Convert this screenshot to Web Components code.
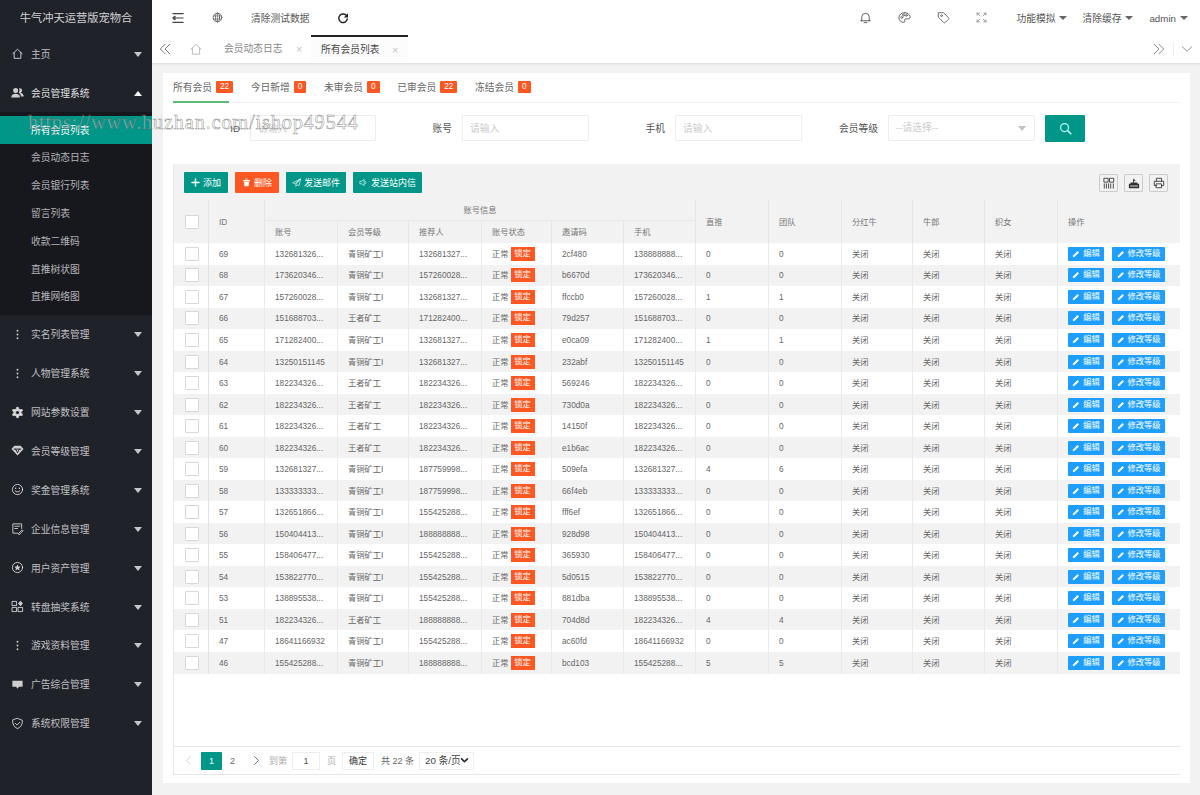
<!DOCTYPE html>
<html lang="zh-CN">
<head>
<meta charset="utf-8">
<title>会员列表</title>
<style>
html,body{margin:0;padding:0;height:795px;overflow:hidden;background:#f2f2f2}
body{font-family:"Liberation Sans","Noto Sans CJK SC",sans-serif;font-size:9.75px;line-height:14px;color:#666}
</style>
</head>
<body>
<admin-app>
  <side-menu slot="side" brand="牛气冲天运营版宠物合">
    <side-item icon="home">主页</side-item>
    <side-item icon="users" open>会员管理系统</side-item>
    <side-group>
      <sub-item active>所有会员列表</sub-item>
      <sub-item>会员动态日志</sub-item>
      <sub-item>会员银行列表</sub-item>
      <sub-item>留言列表</sub-item>
      <sub-item>收款二维码</sub-item>
      <sub-item>直推树状图</sub-item>
      <sub-item>直推网络图</sub-item>
    </side-group>
    <side-item icon="dots">实名列表管理</side-item>
    <side-item icon="dots">人物管理系统</side-item>
    <side-item icon="gear">网站参数设置</side-item>
    <side-item icon="diamond">会员等级管理</side-item>
    <side-item icon="smile">奖金管理系统</side-item>
    <side-item icon="form">企业信息管理</side-item>
    <side-item icon="star">用户资产管理</side-item>
    <side-item icon="apps">转盘抽奖系统</side-item>
    <side-item icon="dots">游戏资料管理</side-item>
    <side-item icon="chat">广告综合管理</side-item>
    <side-item icon="shield">系统权限管理</side-item>
  </side-menu>
  <top-bar></top-bar>
  <tab-bar></tab-bar>
  <member-card>
    <status-tabs></status-tabs>
    <search-form></search-form>
    <member-table></member-table>
    <table-pager></table-pager>
  </member-card>
  <water-mark>https://www.huzhan.com/ishop49544</water-mark>
</admin-app>
<script>
const ICONS={
 home:'<path d="M2 7.200 7 2.400l5 4.800M3.400 6v6.200h7.200V6" fill="none"/>',
 users:'<path fill="currentColor" stroke="none" d="M5 2.200a2.600 2.600 0 0 1 0 5.400 2.600 2.600 0 0 1 0-5.400zM.3 12.300c0-2.600 2-4 4.700-4s4.700 1.400 4.700 4zM9.600 2.400a2.500 2.500 0 0 1 .6 4.900c2 .3 3.500 1.700 3.500 4h-3c-.2-2-1-3.300-2.400-4 1-1.300 1.200-3.500.3-4.900z"/>',
 dots:'<g fill="currentColor" stroke="none"><circle cx="7" cy="3" r="1"/><circle cx="7" cy="7" r="1"/><circle cx="7" cy="11" r="1"/></g>',
 gear:'<g fill="currentColor" stroke="none"><circle cx="7" cy="7" r="4.400"/><circle cx="7" cy="2.200" r="1.500"/><circle cx="7" cy="11.800" r="1.500"/><circle cx="2.800" cy="4.600" r="1.500"/><circle cx="11.200" cy="4.600" r="1.500"/><circle cx="2.800" cy="9.400" r="1.500"/><circle cx="11.200" cy="9.400" r="1.500"/></g><circle cx="7" cy="7" r="1.700" fill="#20222a" stroke="none"/>',
 diamond:'<path fill="currentColor" stroke="none" d="M3.600 2h6.800L13.500 5.500 7 12.500.5 5.500z"/><path d="M3.500 5.500h7M5 5.500 7 9.500l2-4" fill="none" stroke="#20222a" stroke-width="1"/>',
 smile:'<circle cx="7" cy="7" r="5.500" fill="none"/><path d="M4.400 8.400c1.300 1.700 3.900 1.700 5.200 0" fill="none"/><g fill="currentColor" stroke="none"><circle cx="5" cy="5.600" r=".8"/><circle cx="9" cy="5.600" r=".8"/></g>',
 form:'<path d="M11.500 7V2h-9.500v10H7M4 4.500h5.500M4 7h3M8 12.500l4-4 1 1-4 4z" fill="none"/>',
 star:'<circle cx="7" cy="7" r="5.500" fill="none"/><path fill="currentColor" stroke="none" d="m7 3.700 1 2.300 2.400.2-1.800 1.600.6 2.400L7 9l-2.200 1.200.6-2.400-1.800-1.600L6 6z"/>',
 apps:'<g fill="none"><rect x="1.500" y="1.500" width="4.500" height="4.500"/><rect x="1.500" y="8" width="4.500" height="4.500"/><rect x="8" y="8" width="4.500" height="4.500"/></g><path fill="currentColor" stroke="none" d="M10.200.8 12.800 3.700 10.200 6.600 7.600 3.700z"/>',
 chat:'<path fill="currentColor" stroke="none" d="M1.500 3h11v6.500H8.500L7 11.500 5.500 9.500h-4z"/>',
 shield:'<path d="M7 1.500 12.200 3.500c.3 4.500-1.500 7.500-5.200 9-3.700-1.500-5.500-4.500-5.200-9z" fill="none"/><path d="m4.600 6.800 1.900 1.900 3-3" fill="none"/>',
 shrink:'<path d="M1 2h12M5 7h8M1 12h12M3.500 5 1 7l2.500 2z" fill="none" stroke-width="1.400"/>',
 globe:'<circle cx="7" cy="7" r="5.500" fill="none"/><ellipse cx="7" cy="7" rx="2.600" ry="5.500" fill="none"/><path d="M1.800 5h10.400M1.800 9h10.400M7 1.500v11" fill="none" stroke-width=".8"/>',
 refresh:'<path d="M11.500 5A5 5 0 1 0 12 8" fill="none" stroke-width="1.600"/><path fill="currentColor" stroke="none" d="M12.800 1.500v4.800H8z"/>',
 bell:'<path d="M3 10.500V6.500a4 4 0 0 1 8 0v4M1.800 10.500h10.400M5.500 12.500h3" fill="none"/>',
 palette:'<path d="M7 1.800C3.500 1.800 1 4.200 1 7.200s2.500 5 5 5c1.700 0 1.600-1.300 1.200-2-.5-1 .2-1.700 1.300-1.700H11c1.500 0 2.200-1 2-2.500C12.500 3.500 10 1.800 7 1.800z" fill="none"/><g fill="none" stroke-width=".9"><circle cx="4" cy="7" r="1"/><circle cx="5.800" cy="4.500" r="1"/><circle cx="9" cy="4.700" r="1"/></g>',
 tag:'<path d="M1.800 1.800h5.200l5.500 5.500a1 1 0 0 1 0 1.400l-3.800 3.800a1 1 0 0 1-1.400 0L1.800 7z" fill="none"/><circle cx="5" cy="5" r="1" fill="none"/>',
 full:'<path d="M1.500 1.500 5 5M1.500 1.500h2.500M1.500 1.500V4M12.500 1.500 9 5M12.500 1.500H10M12.500 1.500V4M1.500 12.500 5 9M1.500 12.500H4M1.500 12.500V10M12.500 12.500 9 9M12.500 12.500H10M12.500 12.500V10" fill="none"/>',
 left2:'<path d="M7 1.500 1.500 7 7 12.500M12.500 1.500 7 7l5.500 5.500" fill="none"/>',
 right2:'<path d="M1.500 1.500 7 7l-5.500 5.500M7 1.500 12.500 7 7 12.500" fill="none"/>',
 down:'<path d="m1.500 4.500 5.500 5 5.500-5" fill="none"/>',
 left:'<path d="M9.500 2 4.500 7l5 5" fill="none"/>',
 right:'<path d="m4.500 2 5 5-5 5" fill="none"/>',
 chev:'<path d="m2.500 4.500 4.500 4.500 4.500-4.500" fill="none" stroke-width="2.400"/>',
 plus:'<path d="M7 1.500v11M1.500 7h11" fill="none" stroke-width="2.200"/>',
 trash:'<path fill="currentColor" stroke="none" d="M1.500 3h11v2h-11zM3 6h8l-.8 7H3.800zM5 1h4v1.500H5z"/>',
 plane:'<path d="M13 1.500 1 7.500l3.500 1.500L13 1.500 6 10v3l2-2.500 2.500 1z" fill="none"/>',
 speaker:'<path d="M2 5h2.500L8 2v10L4.500 9H2zM10 5c1 1.200 1 2.800 0 4" fill="none"/>',
 search:'<circle cx="6" cy="6" r="4.300" fill="none" stroke-width="1.300"/><path d="m9.300 9.300 3.400 3.400" fill="none" stroke-width="1.700"/>',
 cols:'<path d="M1.500 1.500h4.500V6H1.500zM8 1.500h4.500V6H8zM1.500 8v5M4 8v5M6.500 8v5M9 8v5M12 8v5" fill="none"/>',
 export:'<path fill="currentColor" stroke="none" d="M1 8h12v5H1zM3 6.500h8V8H3zM6 2l3 1.800L7 5v1.500H6z"/><path d="M3 10.500h8" stroke="#f2f2f2" stroke-width="1" fill="none"/>',
 print:'<path d="M4 5V1.500h6V5M4 10H1.500V5h11v5H10M4 8h6v4.500H4z" fill="none"/>',
 pen:'<path fill="currentColor" stroke="none" d="M9.800 1.800 12.200 4.200 4.600 11.800 1.500 12.500 2.200 9.400z"/>'
};
function def(name,css,render){
  customElements.define(name,class extends HTMLElement{
    connectedCallback(){
      if(this.shadowRoot) return;
      const root=this.attachShadow({mode:'open'});
      root.innerHTML='<style>'+css+'</style>'+(render?render(this):'<slot></slot>');
    }
  });
}
def('ui-icon',':host{display:inline-flex;flex:none;width:var(--s,14px);height:var(--s,14px)}svg{width:100%;height:100%;stroke:currentColor;stroke-width:var(--w,1);stroke-linecap:round;stroke-linejoin:round}',
  el=>`<svg viewBox="0 0 14 14">${ICONS[el.getAttribute('name')]||''}</svg>`);
def('admin-app',`:host{display:grid;grid-template-columns:152px 1fr;grid-template-rows:35px 29px 1fr;width:1200px;height:795px;position:relative;overflow:hidden;background:#f2f2f2}
 ::slotted(side-menu){grid-row:1/4}`,()=>`<slot name="side"></slot><slot></slot>`);
def('side-menu',`:host{display:flex;flex-direction:column;background:#20222a;color:rgba(255,255,255,.72);height:795px}
 .brand{height:34.500px;box-sizing:border-box;padding-top:2px;display:flex;align-items:center;justify-content:center;font-size:11.250px;color:rgba(255,255,255,.8)}`,
 el=>`<div class="brand">${el.getAttribute('brand')}</div><slot></slot>`);
def('side-item',`:host{display:flex;align-items:center;height:38.900px;flex:none;position:relative;padding-left:11px;gap:7px;font-size:9.750px;--s:13px;color:rgba(255,255,255,.72)}
 :host([open]){color:rgba(255,255,255,.88)}
 ui-icon{color:rgba(255,255,255,.78)}
 span{padding-top:2px}
 .c{position:absolute;right:10px;top:50%;margin-top:-2px;border:4px solid transparent;border-top:5px solid rgba(255,255,255,.75);border-bottom:0}
 :host([open]) .c{border-top:0;border-bottom:5px solid #fff;}`,
 el=>`<ui-icon name="${el.getAttribute('icon')}"></ui-icon><span><slot></slot></span><i class="c"></i>`);
def('side-group',`:host{display:block;flex:none;background:#17181e;padding:3.500px 0 4.500px}`);
def('sub-item',`:host{display:flex;align-items:center;height:27.800px;box-sizing:border-box;padding:2px 0 0 31px;font-size:9.750px;color:rgba(255,255,255,.68)}
 :host([active]){background:#009688;color:#fff}`);
def('top-bar',`:host{display:flex;align-items:center;height:35px;background:#fff;color:#555;font-size:9.750px;--s:13px}
 .row{display:flex;align-items:center;width:100%;height:35px}
 .left{display:flex;align-items:center;margin-left:19px}
 .right{display:flex;align-items:center;margin-left:auto;padding-right:12px}
 .t{padding-top:2px}
 .mn{display:flex;align-items:center;gap:4px}
 .c{border:4px solid transparent;border-top:4px solid #666;border-bottom:0;display:block;margin-top:-2px}`,
 ()=>`<div class="row"><div class="left">
   <ui-icon name="shrink" style="--s:12px;margin-left:1px;color:#444"></ui-icon>
   <ui-icon name="globe" style="margin-left:28px;--s:11px;color:#555"></ui-icon>
   <span class="t" style="margin-left:28px">清除测试数据</span>
   <ui-icon name="refresh" style="margin-left:27px;--s:12px;color:#222"></ui-icon>
  </div><div class="right">
   <ui-icon name="bell" style="color:#555"></ui-icon>
   <ui-icon name="palette" style="margin-left:26px;color:#555"></ui-icon>
   <ui-icon name="tag" style="margin-left:26px;color:#666"></ui-icon>
   <ui-icon name="full" style="margin-left:26px;--s:11px;color:#888"></ui-icon>
   <span class="mn t" style="margin-left:29px">功能模拟<i class="c"></i></span>
   <span class="mn t" style="margin-left:15px">清除缓存<i class="c"></i></span>
   <span class="mn t" style="margin-left:16px">admin<i class="c"></i></span>
  </div></div>`);
def('tab-bar',`:host{display:flex;align-items:stretch;height:28px;background:#fff;border-bottom:1px solid #e2e2e2;box-shadow:0 1px 1px rgba(0,0,0,.03);font-size:9.750px;color:#888;--s:12px}
 .i{display:flex;align-items:center}
 .tab{display:flex;align-items:center;position:relative;height:28px}
 .t1{margin-left:21px;width:87px;justify-content:flex-start}
 .t2{width:97px;padding-left:10px;box-sizing:border-box;color:#444;background:#fcfcfc;border-top:2px solid #222}
 .x{position:absolute;font-size:11px;color:#c4c4c4;line-height:1}
 .right{margin-left:auto;display:flex;align-items:center}
 .sep{width:1px;height:14px;background:#eee;margin:0 7px 0 8px}`,
 ()=>`<span class="i" style="margin-left:7px;color:#666"><ui-icon name="left2"></ui-icon></span>
  <span class="i" style="margin-left:18px;color:#bbb"><ui-icon name="home" style="--s:14px"></ui-icon></span>
  <span class="tab t1">会员动态日志<span class="x" style="left:72px">×</span></span>
  <span class="tab t2"><span>所有会员列表</span><span class="x" style="left:81px">×</span></span>
  <span class="right"><ui-icon name="right2" style="color:#777"></ui-icon><span class="sep"></span><ui-icon name="down" style="color:#888;margin-right:7px"></ui-icon></span>`);
def('member-card',`:host{display:flex;flex-direction:column;background:#fff;margin:9px 10px 12px 11px;padding:0 10px 8px;min-height:0;height:710px;box-sizing:border-box}`);
def('status-tabs',`:host{display:flex;height:30px;flex:none;gap:17.600px;border-bottom:1px solid #f2f2f2;box-sizing:border-box;font-size:9.750px;color:#666}
 .t{display:flex;align-items:center;gap:4px;position:relative}
 .t.on::after{content:"";position:absolute;left:0;bottom:-1px;width:56px;height:2px;background:#5fb878}
 b{display:block;font-weight:400;background:#ff5722;color:#fff;font-size:8.250px;line-height:12px;height:12px;padding:0 4px;text-align:center;border-radius:1px;margin-top:-1px}`,
 ()=>[['所有会员','22',1],['今日新增','0'],['未审会员','0'],['已审会员','22'],['冻结会员','0']].map(t=>`<span class="t ${t[2]?'on':''}">${t[0]}<b>${t[1]}</b></span>`).join(''));
def('search-form',`:host{display:flex;flex:none;height:61px;box-sizing:border-box;padding-top:12px;align-items:flex-start;font-size:9.750px;color:#555}
 .f{display:grid;align-items:center;height:26px}
 label{text-align:right;padding:2px 10px 0 0}
 input,.s{box-sizing:border-box;height:26px;width:100%;border:1px solid #eee;background:#fff;padding:0 7px;font:inherit;outline:0;border-radius:1px}
 input::placeholder{color:#ccc}
 .s{color:#ccc;display:flex;align-items:center;justify-content:space-between;padding-right:8px}
 .c{border:4px solid transparent;border-top:5px solid #c2c2c2;border-bottom:0}
 .b{width:40px;height:27px;margin-left:10px;background:#009688;color:#bff;display:flex;align-items:center;justify-content:center;--s:13px;border-radius:1px;--w:1.100}`,
 ()=>`<div class="f" style="width:203px;grid-template-columns:77px 126px"><label>ID</label><input placeholder="请输入"></div>
  <div class="f" style="width:213px;grid-template-columns:86px 127px"><label>账号</label><input placeholder="请输入"></div>
  <div class="f" style="width:213px;grid-template-columns:86px 127px"><label>手机</label><input placeholder="请输入"></div>
  <div class="f" style="width:233px;grid-template-columns:86px 147px"><label>会员等级</label><div class="s">--请选择--<i class="c"></i></div></div>
  <span class="b"><ui-icon name="search"></ui-icon></span>`);
const COLS='34px 56px 73px 71px 73px 70px 72px 72px 73px 73px 71px 72px 73px 123px';
const R=[
[69,'132681326...',0,'132681327...','2cf480','138888888...',0,0],
[68,'173620346...',0,'157260028...','b6670d','173620346...',0,0],
[67,'157260028...',0,'132681327...','ffccb0','157260028...',1,1],
[66,'151688703...',1,'171282400...','79d257','151688703...',0,0],
[65,'171282400...',0,'132681327...','e0ca09','171282400...',1,1],
[64,'13250151145',0,'132681327...','232abf','13250151145',0,0],
[63,'182234326...',1,'182234326...','569246','182234326...',0,0],
[62,'182234326...',1,'182234326...','730d0a','182234326...',0,0],
[61,'182234326...',1,'182234326...','14150f','182234326...',0,0],
[60,'182234326...',1,'182234326...','e1b6ac','182234326...',0,0],
[59,'132681327...',0,'187759998...','509efa','132681327...',4,6],
[58,'133333333...',0,'187759998...','66f4eb','133333333...',0,0],
[57,'132651866...',0,'155425288...','fff6ef','132651866...',0,0],
[56,'150404413...',0,'188888888...','928d98','150404413...',0,0],
[55,'158406477...',0,'155425288...','365930','158406477...',0,0],
[54,'153822770...',0,'155425288...','5d0515','153822770...',0,0],
[53,'138895538...',0,'155425288...','881dba','138895538...',0,0],
[51,'182234326...',1,'188888888...','704d8d','182234326...',4,4],
[47,'18641166932',0,'155425288...','ac60fd','18641166932',0,0],
[46,'155425288...',0,'188888888...','bcd103','155425288...',5,5]];
def('tool-btn',`:host{display:inline-flex;align-items:center;justify-content:center;gap:3px;height:21px;width:var(--bw);background:var(--b,#009688);color:#fff;font-size:9px;--s:9px;border-radius:1px;white-space:nowrap}`,
 el=>`<ui-icon name="${el.getAttribute('icon')}"></ui-icon><slot></slot>`);
def('icon-btn',`:host{display:flex;align-items:center;justify-content:center;width:17px;height:16px;border:1px solid #ccc;color:#333;--s:12px;--w:1;border-radius:1px}`,
 el=>`<ui-icon name="${el.getAttribute('icon')}"></ui-icon>`);
def('check-box',`:host{display:block;width:12px;height:12px;background:#fff;border:1px solid #d8d8d8;border-radius:1px;margin-top:-2px}`,()=>'');
def('act-btn',`:host{display:inline-flex;align-items:center;justify-content:center;gap:3px;height:14px;margin-top:-2px;background:#1e9fff;color:#fff;font-size:8.250px;--s:8px;border-radius:1px;white-space:nowrap}`,
 el=>`<ui-icon name="pen"></ui-icon><slot></slot>`);
def('member-row',`:host{display:grid;grid-template-columns:${COLS};height:21.526px;align-items:stretch;font-size:8.250px;line-height:12px;color:#666;background:#fff}
 :host([even]){background:#f2f2f2}
 span.c{display:flex;align-items:center;padding:2px 0 0 10px;border-left:1px solid #eaeaea;box-sizing:border-box;white-space:nowrap;overflow:hidden}
 span.c.first{padding-left:11px;border-left:0}
 .lock{display:inline-block;background:#ff5722;color:#fff;width:24px;height:14px;line-height:14px;text-align:center;margin:-2px 0 0 2px;flex:none}
 .ops{gap:8px}`,
 el=>{const i=+el.getAttribute('i'),d=R[i];const off=k=>`<span class="c">${k}</span>`;
  return `<span class="c first"><check-box></check-box></span>
  <span class="c" style="border-left-color:#e2e2e2">${d[0]}</span>${off(d[1])}${off(d[2]?'王者矿工':'青铜矿工I')}${off(d[3])}
  <span class="c">正常<span class="lock">锁定</span></span>${off(d[4])}${off(d[5])}${off(d[6])}${off(d[7])}${off('关闭')}${off('关闭')}${off('关闭')}
  <span class="c ops"><act-btn style="width:36px">编辑</act-btn><act-btn style="width:53px">修改等级</act-btn></span>`});
def('member-table',`:host{display:flex;flex-direction:column;flex:1;min-height:0;font-size:8.250px;line-height:12px;color:#666;border-left:1px solid #e6e6e6;box-sizing:border-box}
 .bar{display:flex;align-items:flex-start;height:36px;flex:none;background:#f2f2f2;padding:8px 12px 0 10px;gap:7px;box-sizing:border-box}
 .bar .r{margin-left:auto;display:flex;gap:6px;margin-top:2px}
 .head{display:grid;grid-template-columns:${COLS};grid-template-rows:21px 22.200px;flex:none;background:#f2f2f2;color:#777}
 .h{display:flex;align-items:center;padding:2px 0 0 10px;border-left:1px solid #e6e6e6;box-sizing:border-box;white-space:nowrap}
 .span{grid-row:1/3}
 .group{grid-column:3/9;justify-content:center;padding-left:0;border-bottom:1px solid #e6e6e6}
 .h.nb{border-left:0;padding-left:11px}`,
 ()=>{
  const sub=['账号','会员等级','推荐人','账号状态','邀请码','手机'];
  const tail=['直推','团队','分红牛','牛郎','织女','操作'];
  return `<div class="bar"><tool-btn icon="plus" style="--bw:44px">添加</tool-btn><tool-btn icon="trash" style="--b:#ff5722;--bw:44px">删除</tool-btn><tool-btn icon="plane" style="--bw:60px">发送邮件</tool-btn><tool-btn icon="speaker" style="--bw:69px">发送站内信</tool-btn>
   <div class="r"><icon-btn icon="cols"></icon-btn><icon-btn icon="export"></icon-btn><icon-btn icon="print"></icon-btn></div></div>
  <div class="head"><div class="h span nb"><check-box></check-box></div><div class="h span">ID</div><div class="h group">账号信息</div>
   ${tail.map((t,i)=>`<div class="h span" style="grid-column:${9+i}">${t}</div>`).join('')}
   ${sub.map((t,i)=>`<div class="h" style="grid-row:2;grid-column:${3+i}">${t}</div>`).join('')}</div>
  ${R.map((d,i)=>`<member-row i="${i}" ${i%2?'even':''}></member-row>`).join('')}`});
def('table-pager',`:host{display:flex;align-items:center;flex:none;height:29px;box-sizing:border-box;border:1px solid #e6e6e6;border-right:0;font-size:9px;color:#666;padding-left:9px;margin-top:auto;--s:11px}
 .cur{width:21px;height:18px;background:#009688;color:#fff;display:flex;align-items:center;justify-content:center;margin-left:7px;border-radius:1px}
 .box{box-sizing:border-box;height:18px;border:1px solid #eee;display:flex;align-items:center;justify-content:center;background:#fff}
 select{appearance:none;-webkit-appearance:none;box-sizing:border-box;height:18px;width:55px;border:1px solid #eee;background:#fff;color:#444;font:inherit;font-size:9.750px;padding:0 0 0 5px;margin-left:7px;outline:0}
 .chev{position:relative;margin-left:-14px;--s:9px;color:#222;pointer-events:none}
 .g{color:#aaa}`,
 ()=>`<ui-icon name="left" style="color:#ccc"></ui-icon><span class="cur">1</span><span style="margin-left:8px">2</span>
 <ui-icon name="right" style="margin-left:16px;color:#555"></ui-icon><span class="g" style="margin-left:7px">到第</span>
 <span class="box" style="width:28px;margin-left:5px;color:#555">1</span><span class="g" style="margin-left:7px">页</span>
 <span class="box" style="width:32px;margin-left:6px;color:#333">确定</span><span style="margin-left:7px;width:31px;white-space:nowrap">共 22 条</span>
 <select><option>20 条/页</option><option>30 条/页</option></select><ui-icon class="chev" name="chev"></ui-icon>`);
def('water-mark',`:host{position:absolute;left:28px;top:109px;font-family:"Liberation Serif",serif;font-size:20.500px;letter-spacing:.740px;line-height:26px;color:rgba(255,255,255,.35);-webkit-text-stroke:.5px rgba(95,95,95,.75);white-space:nowrap;pointer-events:none}`);
</script>
</body>
</html>
